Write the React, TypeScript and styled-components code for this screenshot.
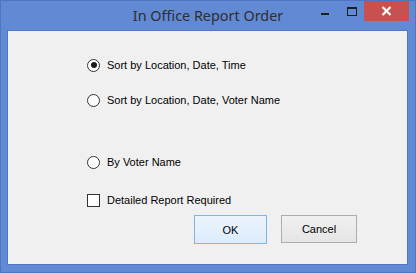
import styled, { createGlobalStyle } from 'styled-components'

const GlobalStyle = createGlobalStyle`
  html, body {
    margin: 0;
    padding: 0;
    width: 416px;
    height: 273px;
    overflow: hidden;
  }
`

export default function App() {
  return (
    <>
      <GlobalStyle />
      <Window>
        <TitleBar>
          <Title>In Office Report Order</Title>
          <Controls>
            <MinButton><span /></MinButton>
            <MaxButton><span /></MaxButton>
            <CloseButton>
              <svg width="11" height="10" viewBox="0 0 11 10">
                <path d="M1.5 1 L9.5 9 M9.5 1 L1.5 9" stroke="#fff" strokeWidth="2.2" />
              </svg>
            </CloseButton>
          </Controls>
        </TitleBar>
        <Client>
          <Options>
            <OptionRow $top={27}>
              <Radio $checked />
              <Label>Sort by Location, Date, Time</Label>
            </OptionRow>
            <OptionRow $top={21}>
              <Radio />
              <Label>Sort by Location, Date, Voter Name</Label>
            </OptionRow>
            <OptionRow $top={48}>
              <Radio />
              <Label>By Voter Name</Label>
            </OptionRow>
            <OptionRow $top={24}>
              <Checkbox />
              <Label>Detailed Report Required</Label>
            </OptionRow>
          </Options>
          <ButtonRow>
            <DialogButton $primary>OK</DialogButton>
            <DialogButton>Cancel</DialogButton>
          </ButtonRow>
        </Client>
      </Window>
    </>
  )
}

const Window = styled.div`
  width: 416px;
  height: 273px;
  box-sizing: border-box;
  background: #6289d3;
  border: 1px solid #4c76c2;
  display: flex;
  flex-direction: column;
`

const TitleBar = styled.div`
  height: 29px;
  position: relative;
  display: flex;
  justify-content: center;
`

const Title = styled.div`
  font-family: "Noto Sans", "Open Sans", sans-serif;
  font-size: 14.4px;
  color: #2e2e2e;
  line-height: 30px;
`

const Controls = styled.div`
  position: absolute;
  top: 0;
  right: 6px;
  display: flex;
  align-items: stretch;
  height: 20px;
`

const MinButton = styled.div`
  width: 26px;
  position: relative;

  span {
    position: absolute;
    left: 9px;
    top: 12px;
    width: 8px;
    height: 2px;
    background: #1e1e1e;
  }
`

const MaxButton = styled.div`
  width: 26px;
  position: relative;

  span {
    position: absolute;
    left: 9px;
    top: 6px;
    width: 8px;
    height: 6px;
    border: 1px solid #1e1e1e;
    border-top-width: 2px;
  }
`

const CloseButton = styled.div`
  width: 45px;
  background: #c75050;
  display: flex;
  align-items: center;
  justify-content: center;
`

const Client = styled.div`
  flex: 1;
  margin: 0 7px 7px 6px;
  background: #f0f0f0;
  border: 1px solid #4f78c4;
  display: flex;
  flex-direction: column;
`

const Options = styled.div`
  display: flex;
  flex-direction: column;
  padding-left: 79px;
`

const OptionRow = styled.div<{ $top: number }>`
  margin-top: ${p => p.$top}px;
  height: 14px;
  display: flex;
  align-items: center;
`

const Radio = styled.span<{ $checked?: boolean }>`
  width: 13px;
  height: 13px;
  box-sizing: border-box;
  border-radius: 50%;
  border: 1px solid #333;
  background: #fff;
  display: flex;
  align-items: center;
  justify-content: center;

  &::after {
    content: '';
    width: 6px;
    height: 6px;
    border-radius: 50%;
    background: ${p => (p.$checked ? '#1a1a1a' : 'transparent')};
  }
`

const Checkbox = styled.span`
  width: 13px;
  height: 13px;
  box-sizing: border-box;
  border: 1px solid #333;
  background: #fff;
`

const Label = styled.span`
  margin-left: 7px;
  font-family: "Liberation Sans", Arial, sans-serif;
  font-size: 11px;
  color: #000;
`

const ButtonRow = styled.div`
  display: flex;
  justify-content: flex-end;
  align-items: flex-start;
  gap: 14px;
  margin-top: 8px;
  padding-right: 50px;
`

const DialogButton = styled.button<{ $primary?: boolean }>`
  width: ${p => (p.$primary ? 73 : 76)}px;
  height: ${p => (p.$primary ? 29 : 28)}px;
  box-sizing: border-box;
  padding: 0;
  font-family: "Liberation Sans", Arial, sans-serif;
  font-size: 11px;
  color: #000;
  border: 1px solid ${p => (p.$primary ? '#7eb4ea' : '#adadad')};
  background: ${p =>
    p.$primary
      ? 'linear-gradient(#ecf4fc, #dcecfc)'
      : 'linear-gradient(#f0f0f0, #e5e5e5)'};
`
